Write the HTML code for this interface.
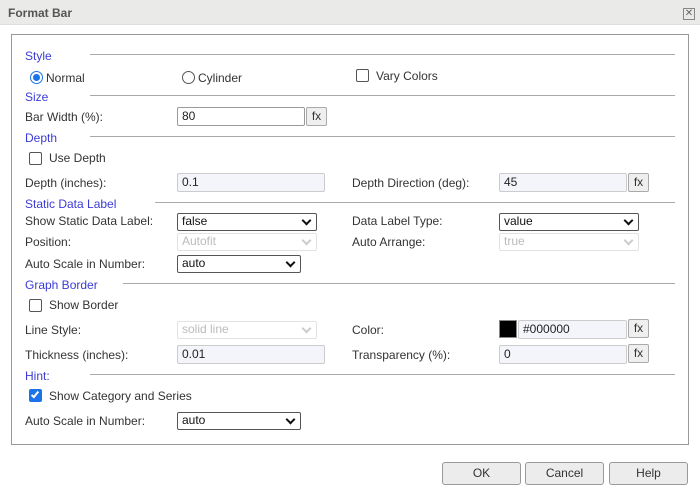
<!DOCTYPE html>
<html><head><style>
*{box-sizing:border-box;margin:0;padding:0}
body{width:700px;height:500px;background:#fff;font-family:"Liberation Sans",sans-serif;font-size:12px;color:#333;position:relative;overflow:hidden}
.a{position:absolute;white-space:nowrap;line-height:14px}
.h{color:#3b3bd6}
.ln{position:absolute;height:1px;background:#aaa}
.in{position:absolute;border:1px solid #9a9a9a;border-radius:2px;background:#fff;padding-left:4px;line-height:16px;height:19px;color:#222}
.dis{background:#f4f5fb;border-color:#ccc}
.fx{position:absolute;width:21px;height:19px;border:1px solid #aaa;border-radius:2px;background:#efefef;text-align:center;line-height:16px;color:#333}
.sel{position:absolute;height:18px;border:1px solid #555;border-radius:2px;background:#fff;padding-left:4px;line-height:15px;color:#111}
.sel::after{content:"";position:absolute;right:6px;top:3px;width:5px;height:5px;border-right:2px solid #111;border-bottom:2px solid #111;transform:rotate(45deg)}
.sel.d{border-color:#e2e2e2;color:#bbb}
.sel.d::after{border-color:#ccc}
.cb{position:absolute;width:13px;height:13px;border:1px solid #555;border-radius:2px;background:#fff}
.rd{position:absolute;width:13px;height:13px;border:1px solid #555;border-radius:50%;background:#fff}
.btn{position:absolute;top:462px;width:79px;height:23px;border:1px solid #999;border-radius:3px;background:#ececec;text-align:center;line-height:21px;color:#333}
</style></head><body>
<div style="position:absolute;left:0;top:0;width:700px;height:25px;background:#eaeae8;border-bottom:1px solid #ddd"></div>
<div class="a" style="left:8px;top:6px;font-weight:bold;color:#555;font-size:12px">Format Bar</div>
<div style="position:absolute;left:683px;top:8px;width:12px;height:12px;border:1px solid #888;font-size:10px;line-height:10px;text-align:center;color:#666">✕</div>
<div style="position:absolute;left:11px;top:34px;width:678px;height:411px;border:1px solid #999"></div>

<div class="a h" style="left:25px;top:49px">Style</div><div class="ln" style="left:90px;top:54px;width:585px"></div>
<div class="rd" style="left:30px;top:71px;border-color:#1a73e8"><div style="position:absolute;left:2px;top:2px;width:7px;height:7px;border-radius:50%;background:#1a73e8"></div></div>
<div class="a" style="left:46px;top:71px">Normal</div>
<div class="rd" style="left:182px;top:71px"></div><div class="a" style="left:198px;top:71px">Cylinder</div>
<div class="cb" style="left:356px;top:69px"></div><div class="a" style="left:376px;top:69px">Vary Colors</div>

<div class="a h" style="left:25px;top:90px">Size</div><div class="ln" style="left:90px;top:95px;width:585px"></div>
<div class="a" style="left:25px;top:110px">Bar Width (%):</div>
<div class="in" style="left:177px;top:107px;width:128px">80</div><div class="fx" style="left:306px;top:107px">fx</div>

<div class="a h" style="left:25px;top:131px">Depth</div><div class="ln" style="left:90px;top:136px;width:585px"></div>
<div class="cb" style="left:29px;top:152px"></div><div class="a" style="left:49px;top:151px">Use Depth</div>
<div class="a" style="left:25px;top:176px">Depth (inches):</div>
<div class="in dis" style="left:177px;top:173px;width:148px">0.1</div>
<div class="a" style="left:352px;top:176px">Depth Direction (deg):</div>
<div class="in dis" style="left:499px;top:173px;width:128px">45</div><div class="fx" style="left:628px;top:173px">fx</div>

<div class="a h" style="left:25px;top:197px">Static Data Label</div><div class="ln" style="left:155px;top:202px;width:520px"></div>
<div class="a" style="left:25px;top:214px">Show Static Data Label:</div>
<div class="sel" style="left:177px;top:213px;width:140px">false</div>
<div class="a" style="left:352px;top:214px">Data Label Type:</div>
<div class="sel" style="left:499px;top:213px;width:140px">value</div>
<div class="a" style="left:25px;top:235px">Position:</div>
<div class="sel d" style="left:177px;top:233px;width:140px">Autofit</div>
<div class="a" style="left:352px;top:235px">Auto Arrange:</div>
<div class="sel d" style="left:499px;top:233px;width:140px">true</div>
<div class="a" style="left:25px;top:257px">Auto Scale in Number:</div>
<div class="sel" style="left:177px;top:255px;width:124px">auto</div>

<div class="a h" style="left:25px;top:278px">Graph Border</div><div class="ln" style="left:123px;top:283px;width:552px"></div>
<div class="cb" style="left:29px;top:299px"></div><div class="a" style="left:49px;top:298px">Show Border</div>
<div class="a" style="left:25px;top:323px">Line Style:</div>
<div class="sel d" style="left:177px;top:321px;width:140px">solid line</div>
<div class="a" style="left:352px;top:323px">Color:</div>
<div style="position:absolute;left:499px;top:320px;width:18px;height:18px;background:#000;border:1px solid #888"></div>
<div class="in dis" style="left:518px;top:320px;width:109px">#000000</div><div class="fx" style="left:628px;top:319px">fx</div>
<div class="a" style="left:25px;top:348px">Thickness (inches):</div>
<div class="in dis" style="left:177px;top:345px;width:148px">0.01</div>
<div class="a" style="left:352px;top:348px">Transparency (%):</div>
<div class="in dis" style="left:499px;top:345px;width:128px">0</div><div class="fx" style="left:628px;top:344px">fx</div>

<div class="a h" style="left:25px;top:369px">Hint:</div><div class="ln" style="left:90px;top:374px;width:585px"></div>
<div class="cb" style="left:29px;top:389px;background:#1a73e8;border-color:#1a73e8"><div style="position:absolute;left:3px;top:0px;width:4px;height:8px;border-right:2px solid #fff;border-bottom:2px solid #fff;transform:rotate(40deg)"></div></div>
<div class="a" style="left:49px;top:389px">Show Category and Series</div>
<div class="a" style="left:25px;top:414px">Auto Scale in Number:</div>
<div class="sel" style="left:177px;top:412px;width:124px">auto</div>

<div class="btn" style="left:442px">OK</div>
<div class="btn" style="left:525px">Cancel</div>
<div class="btn" style="left:609px">Help</div>
</body></html>
